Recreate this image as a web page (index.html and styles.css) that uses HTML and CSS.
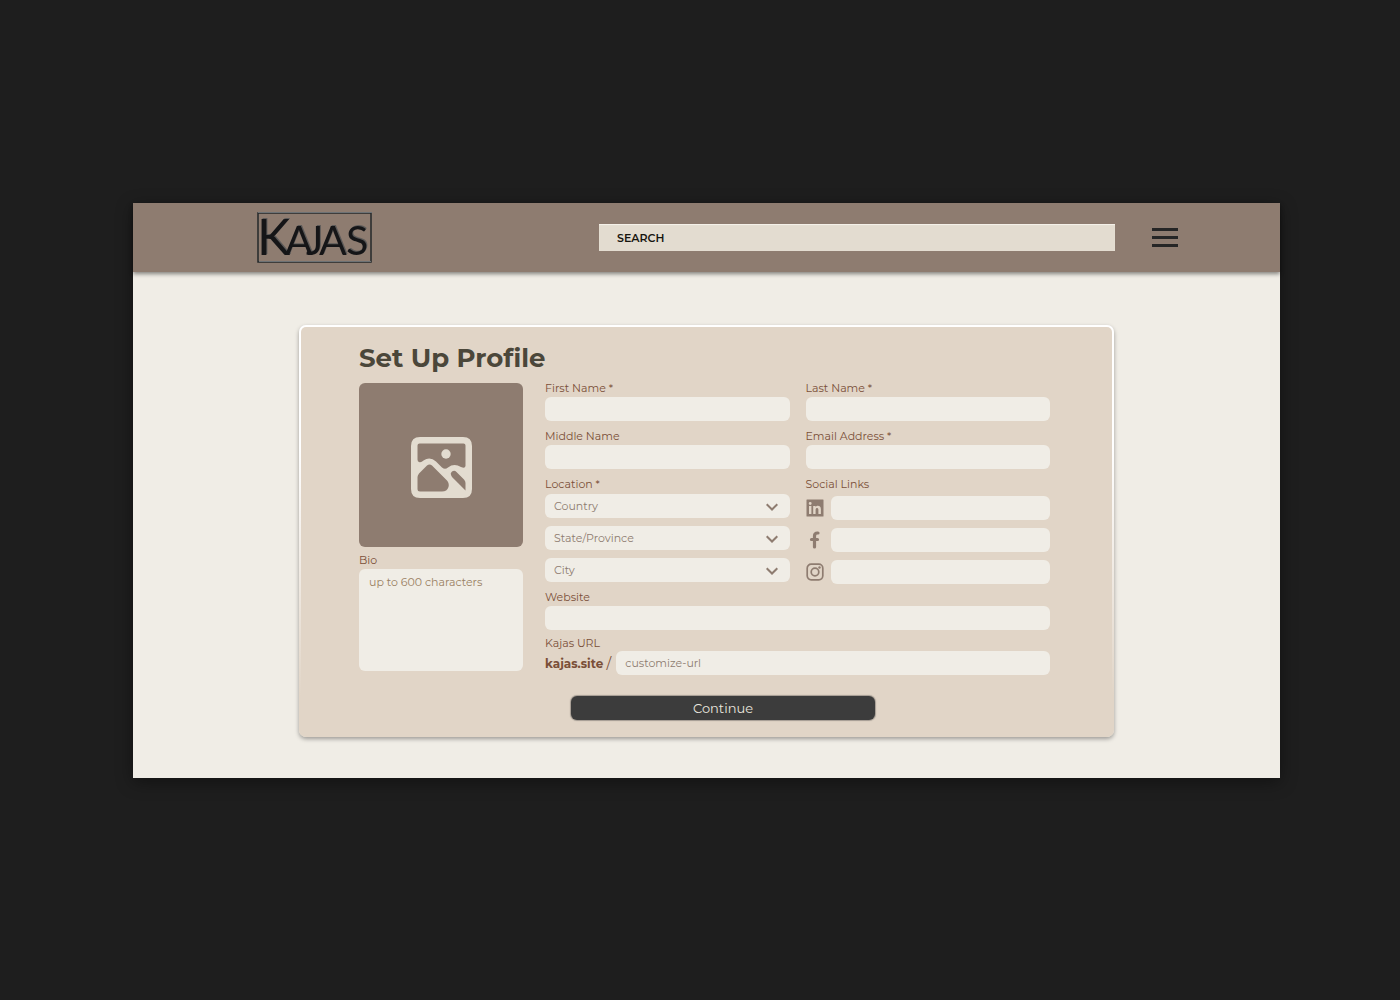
FILE: index.html
```html
<!DOCTYPE html>
<html lang="en">
<head>
<meta charset="utf-8">
<meta name="viewport" content="width=device-width, initial-scale=1">
<title>Kajas – Set Up Profile</title>
<link rel="stylesheet" href="styles.css">
</head>
<body>
<div class="window">
  <header class="topbar">
    <a class="logo" href="#" aria-label="Kajas home">
      <svg width="115" height="51" viewBox="0 0 115 51">
        <rect x="1" y="1" width="113" height="49" fill="none" stroke="#25282a" stroke-width="1.500"/>
        <path d="M1 .5h114M2 49.500h112" stroke="#6d7275" fill="none"/>
        <text class="logo-text" y="43" x="0 28 49 62 89"><tspan class="logo-initial">K</tspan>AJAS</text>
      </svg>
    </a>
    <input class="search" type="search" placeholder="SEARCH" aria-label="Search">
    <button class="menu" type="button" aria-label="Menu"><span class="bar"></span><span class="bar"></span><span class="bar"></span></button>
  </header>
  <main class="card">
    <h1 class="title">Set Up Profile</h1>
    <form>
      <div class="columns">
        <div class="side">
          <button class="photo" type="button" aria-label="Upload photo">
            <svg width="61" height="61" viewBox="0 0 61 61">
              <path fill="#e3dcd0" fill-rule="evenodd" d="M9 0H52Q61 0 61 9V52Q61 61 52 61H9Q0 61 0 52V9Q0 0 9 0ZM8.500 6.500Q6.500 6.500 6.500 8.500V22.500Q6.500 24.500 8 25Q10 26 12.500 23.500Q19 19 25 24.500L31 30.500Q34 33 37 30.500Q43 26 50 30Q54 32 54.500 29V8.500Q54.500 6.500 52.500 6.500ZM6.500 52V40Q6.500 38.500 8 36.500L16 28.500Q18.500 26.500 21 28.500L36 43.500Q38.500 46.500 37.500 50Q36 54.500 31 54.500H9Q6.500 54.500 6.500 52ZM40 38Q39 36 41 34.500Q43.500 33 45.500 35L53 42.500Q54.500 44 54.500 46V53.500L41 40Z"/>
              <circle cx="35" cy="17" r="4.700" fill="#e3dcd0"/>
            </svg>
          </button>
          <label class="label" for="bio">Bio</label>
          <textarea class="field bio" id="bio" placeholder="up to 600 characters"></textarea>
        </div>
        <div class="main">
          <div class="pair">
            <div class="stack">
              <div class="group"><label class="label" for="first">First Name *</label><input class="field" id="first" type="text"></div>
              <div class="group"><label class="label" for="middle">Middle Name</label><input class="field" id="middle" type="text"></div>
              <div class="group">
                <label class="label" for="country">Location *</label>
                <div class="list">
                  <div class="pick"><select class="field" id="country"><option>Country</option></select><svg class="chevron" width="12" height="8" viewBox="0 0 12 8"><path d="M.7 1.300L6 6.500L11.300 1.300"/></svg></div>
                  <div class="pick"><select class="field" aria-label="State or province"><option>State/Province</option></select><svg class="chevron" width="12" height="8" viewBox="0 0 12 8"><path d="M.7 1.300L6 6.500L11.300 1.300"/></svg></div>
                  <div class="pick"><select class="field" aria-label="City"><option>City</option></select><svg class="chevron" width="12" height="8" viewBox="0 0 12 8"><path d="M.7 1.300L6 6.500L11.300 1.300"/></svg></div>
                </div>
              </div>
            </div>
            <div class="stack">
              <div class="group"><label class="label" for="last">Last Name *</label><input class="field" id="last" type="text"></div>
              <div class="group"><label class="label" for="email">Email Address *</label><input class="field" id="email" type="email"></div>
              <div class="group">
                <label class="label" for="linkedin">Social Links</label>
                <div class="list social">
                  <div class="link">
                    <svg class="icon" viewBox="0 0 18 18"><path fill-rule="evenodd" d="M1 .5H17Q17.500.5 17.500 1V17Q17.500 17.500 17 17.500H1Q.5 17.500.5 17V1Q.5.5 1 .5ZM3 7V15H5.400V7ZM4.200 3A1.400 1.400 0 1 0 4.200 5.900A1.400 1.400 0 1 0 4.200 3ZM7.200 7V15H9.600V10.800C9.600 8.400 12.400 8.400 12.400 10.800V15H14.900V10.200C14.900 6.400 11 6 9.600 8V7Z"/></svg>
                    <input class="field" id="linkedin" type="url">
                  </div>
                  <div class="link">
                    <svg class="icon" viewBox="0 0 18 18"><path d="M12 2H11.500Q8.500 2 8.500 5V16M5.500 8.500H11.500" fill="none" stroke="currentColor" stroke-width="3.200" stroke-linecap="round"/></svg>
                    <input class="field" aria-label="Facebook" type="url">
                  </div>
                  <div class="link">
                    <svg class="icon" viewBox="0 0 18 18"><g fill="none" stroke="currentColor" stroke-width="1.700"><rect x="1.200" y="1.200" width="15.600" height="15.600" rx="4"/><circle cx="9" cy="9" r="3.800"/></g><circle cx="13.500" cy="4.500" r="1.200"/></svg>
                    <input class="field" aria-label="Instagram" type="url">
                  </div>
                </div>
              </div>
            </div>
          </div>
          <div class="group website"><label class="label" for="website">Website</label><input class="field" id="website" type="url"></div>
          <div class="group url">
            <label class="label" for="url">Kajas URL</label>
            <div class="url-row"><span class="prefix"><b>kajas.site</b> <span class="slash">/</span></span><input class="field" id="url" type="text" placeholder="customize-url"></div>
          </div>
        </div>
      </div>
      <button class="continue" type="submit">Continue</button>
    </form>
  </main>
</div>
</body>
</html>
```
FILE: styles.css
```css
* { box-sizing: border-box; }
body {
  margin: 0;
  padding: 203px 120px 40px 133px;
  background: #1e1e1e;
  font-family: Montserrat, Inter, sans-serif;
  font-size: 11px;
}
button, input, select, textarea { font: inherit; border: 0; margin: 0; }
.window {
  display: flow-root;
  background: #f0ede6;
  box-shadow: 0 4px 16px rgba(0, 0, 0, .4);
}

/* Top bar */
.topbar {
  display: flex;
  align-items: center;
  height: 69px;
  padding: 0 102px 0 124px;
  background: #8e7c70;
  box-shadow: 0 2px 4px rgba(0, 0, 0, .45);
}
.logo { display: block; height: 51px; }
.logo svg { display: block; overflow: visible; }
.logo-text {
  fill: #151517;
  font-family: Lato, sans-serif;
  font-size: 41px;
  filter: drop-shadow(1px -1px 0 #5c5a59);
}
.logo-initial { font-size: 50px; }
.search {
  flex: 0 1 516px;
  min-width: 0;
  height: 27px;
  margin-left: auto;
  padding: 0 18px;
  border-radius: 0;
  appearance: none;
  background: #e3dcd0;
  box-shadow: inset 0 1px 1px #f5f2ea;
  font-weight: 600;
}
.search::placeholder { color: #17150f; opacity: 1; }
.menu {
  display: flex;
  flex-direction: column;
  gap: 5px;
  margin-left: 37px;
  padding: 0;
  background: none;
}
.bar { width: 26px; height: 3px; background: #262626; }

/* Profile card */
.card {
  margin: 53px 166px 41px;
  padding: 15px 62px 15px 58px;
  border: 2px solid transparent;
  border-radius: 7px;
  background:
    linear-gradient(#e1d5c7, #e1d5c7) padding-box,
    linear-gradient(#fff 0%, #fff 30%, #e1d5c7 90%) border-box;
  box-shadow: 0 2px 4px rgba(0, 0, 0, .35);
}
.title {
  margin: 0 0 6px;
  color: #4b473a;
  font-size: 26px;
  line-height: 32px;
  font-weight: 700;
}
.columns { display: flex; gap: 22px; }
.side { flex: none; width: 164px; padding-top: 3px; }
.photo {
  display: grid;
  place-items: center;
  width: 100%;
  height: 164px;
  margin-bottom: 5px;
  padding: 5px 0 0;
  border-radius: 6px;
  background: #8e7c70;
}
.label {
  display: block;
  margin-bottom: 1px;
  color: #7a4f38;
  line-height: 16px;
}
.field {
  display: block;
  width: 100%;
  min-width: 0;
  height: 24px;
  padding: 0 9px;
  border-radius: 6px;
  background: #f0ede6;
  color: #8e7c70;
}
.field::placeholder { color: #8e7c70; opacity: 1; }
.bio { height: 102px; padding: 5px 10px; resize: none; line-height: 16px; }
.bio::placeholder { color: #9a8062; }
.main { flex: 1; min-width: 0; }
.pair { display: grid; grid-template-columns: 1fr 1fr; gap: 16px; }
.stack { display: flex; flex-direction: column; gap: 7px; }
.list { display: flex; flex-direction: column; gap: 8px; padding-top: 1px; }
.pick { position: relative; }
.pick select { appearance: none; padding-bottom: 1px; }
.chevron {
  position: absolute;
  right: 12px;
  top: 9px;
  fill: none;
  stroke: #8e7c70;
  stroke-width: 2;
  pointer-events: none;
}
.social { padding-top: 3px; }
.link { display: flex; align-items: center; gap: 7px; }
.icon { flex: none; width: 18px; height: 18px; color: #8e7c70; fill: currentColor; }
.website { margin-top: 5px; }
.url { margin-top: 5px; }
.url .label { margin-bottom: 0; }
.url-row { display: flex; align-items: center; gap: 5px; }
.prefix { flex: none; color: #7a4f38; font-size: 12px; white-space: nowrap; }
.slash { font-size: 14px; }
.continue {
  display: block;
  width: 44%;
  height: 24px;
  margin: 21px 0 0 212px;
  border-radius: 6px;
  background: #3c3c3c;
  box-shadow: 0 0 1px 1px #a39b92;
  color: #e9e5de;
  font-size: 13px;
  line-height: 24px;
  padding: 0;
}
```
